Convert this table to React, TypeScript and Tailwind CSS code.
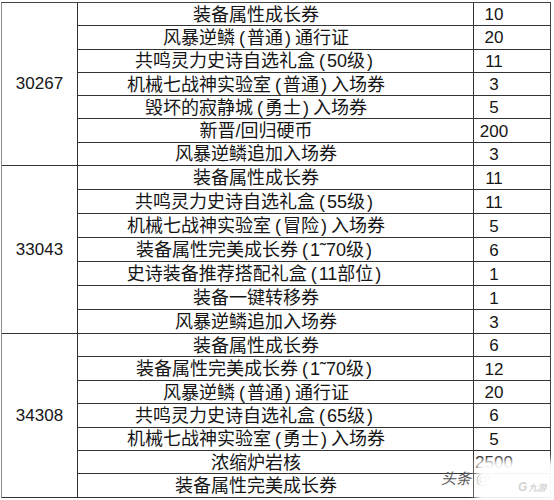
const groups = [
  {
    id: "30267",
    rowH: "h-[23.3px]",
    rows: [
      ["装备属性成长券", "10"],
      ["风暴逆鳞(普通)通行证", "20"],
      ["共鸣灵力史诗自选礼盒(50级)", "11"],
      ["机械七战神实验室(普通)入场券", "3"],
      ["毁坏的寂静城(勇士)入场券", "5"],
      ["新晋/回归硬币", "200"],
      ["风暴逆鳞追加入场券", "3"],
    ],
  },
  {
    id: "33043",
    rowH: "h-[24px]",
    rows: [
      ["装备属性成长券", "11"],
      ["共鸣灵力史诗自选礼盒(55级)", "11"],
      ["机械七战神实验室(冒险)入场券", "5"],
      ["装备属性完美成长券(1˜70级)", "6"],
      ["史诗装备推荐搭配礼盒(11部位)", "1"],
      ["装备一键转移券", "1"],
      ["风暴逆鳞追加入场券", "3"],
    ],
  },
  {
    id: "34308",
    rowH: "h-[23.4px]",
    rows: [
      ["装备属性成长券", "6"],
      ["装备属性完美成长券(1˜70级)", "12"],
      ["风暴逆鳞(普通)通行证", "20"],
      ["共鸣灵力史诗自选礼盒(65级)", "6"],
      ["机械七战神实验室(勇士)入场券", "5"],
      ["浓缩炉岩核", "2500"],
      ["装备属性完美成长券", ""],
    ],
  },
];

// parens in the picture sit wider than plain half-width ones
const Name = ({ text }: { text: string }) => {
  const parts = text.split(/([()])/);
  return (
    <>
      {parts.map((p, i) =>
        p === "(" ? (
          <span key={i} className="pl-[4px] pr-[2px]">(</span>
        ) : p === ")" ? (
          <span key={i} className="pl-[2px] pr-[4px]">)</span>
        ) : (
          <span key={i}>{p}</span>
        )
      )}
    </>
  );
};

export default function App() {
  return (
    <div className="relative w-[554px] h-[500px] overflow-hidden bg-white pt-[2px] pl-[1px] text-[#151515]">
      <div className="w-[550px] border-t border-l border-r border-t-[#444] border-l-[#8a8a8a] border-r-[#444]">
        {groups.map((g) => (
          <div key={g.id} className="flex">
            {/* id cell */}
            <div className="w-[76px] flex items-center justify-center border-r border-b border-[#333] font-['Liberation_Sans',sans-serif] text-[17px]">
              {g.id}
            </div>

            {/* rows */}
            <div className="flex-1 flex flex-col">
              {g.rows.map(([name, qty], i) => (
                <div key={i} className={`${g.rowH} flex border-b border-[#333]`}>
                  <div className="flex-1 flex items-center justify-center pr-[39px] pt-[1px] border-r border-[#333] font-['Liberation_Sans','Noto_Sans_CJK_SC',sans-serif] text-[18px] leading-none whitespace-nowrap">
                    <Name text={name} />
                  </div>
                  <div className="w-[76px] flex items-center justify-center pr-[36px] pt-[1px] font-['Liberation_Sans',sans-serif] text-[17px] leading-none">
                    {qty}
                  </div>
                </div>
              ))}
            </div>
          </div>
        ))}
      </div>

      {/* watermark */}
      <div className="absolute left-[441px] top-[471px] font-['Liberation_Sans','Noto_Sans_CJK_SC',sans-serif] text-[15px] italic text-[#555] leading-none">
        头条 @
      </div>
      <div className="absolute left-[476px] top-[460px] w-[84px] h-[44px] bg-white/95 blur-[3px]" />
      <div className="absolute left-[518px] top-[481px] font-['Liberation_Sans','Noto_Sans_CJK_SC',sans-serif] text-[12px] italic font-bold text-[#d4d4d4] leading-none">
        G<span className="text-[9px] ml-[1px]">九游</span>
      </div>
    </div>
  );
}
